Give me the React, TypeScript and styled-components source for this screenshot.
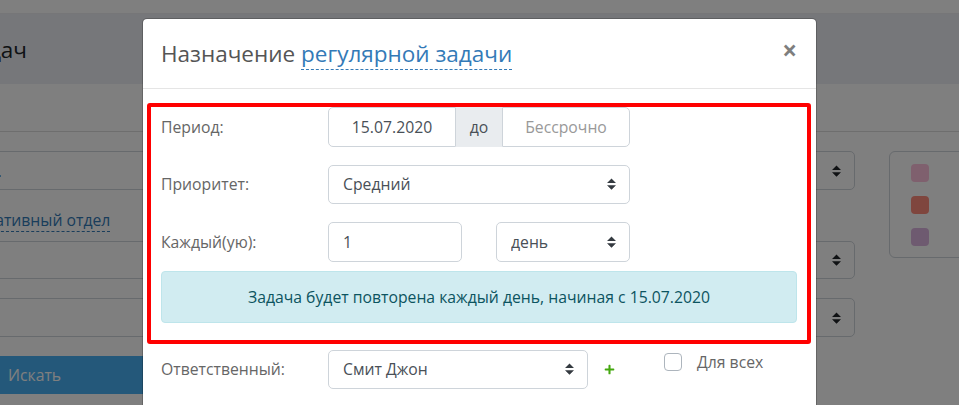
import React from 'react';
import styled, { createGlobalStyle } from 'styled-components';
import { FaPlus } from 'react-icons/fa';

const arrows = (color: string) =>
  `url("data:image/svg+xml,%3csvg xmlns='http://www.w3.org/2000/svg' viewBox='0 0 4 5'%3e%3cpath fill='${color}' d='M2 0L0 2h4zm0 5L0 3h4z'/%3e%3c/svg%3e")`;

const App = () => {
  return (
    <>
      <GlobalStyle />
      <Page>
        <TopBar />
        <TitleBar>
          <PageTitle>Список задач</PageTitle>
        </TitleBar>
        <TabStrip />
        <Filters>
          <LeftColumn>
            <FilterBox>Все.</FilterBox>
            <LinkRow>
              <DepartmentLink>Административный отдел</DepartmentLink>
            </LinkRow>
            <FilterBox $height={38} />
            <FilterBox $top={19} />
            <SearchButton>Искать</SearchButton>
          </LeftColumn>
          <RightColumn>
            <FilterSelect />
            <LinkRow />
            <FilterSelect $height={38} />
            <FilterSelect $top={19} />
          </RightColumn>
          <SwatchPanel>
            <Swatch $color='#ffc0dc' />
            <Swatch $color='#ff8c7c' />
            <Swatch $color='#dcb4e0' />
          </SwatchPanel>
        </Filters>

        <Overlay />

        <Modal>
          <ModalHeader>
            <ModalTitle>
              Назначение <TitleLink>регулярной задачи</TitleLink>
            </ModalTitle>
            <CloseButton>×</CloseButton>
          </ModalHeader>
          <ModalBody>
            <Highlight>
              <FormRow>
                <Label>Период:</Label>
                <DateGroup>
                  <DateInput readOnly value='15.07.2020' />
                  <DateAddon>до</DateAddon>
                  <DateInput $end readOnly placeholder='Бессрочно' />
                </DateGroup>
              </FormRow>
              <FormRow>
                <Label>Приоритет:</Label>
                <Select $width={302} defaultValue='Средний'>
                  <option>Средний</option>
                </Select>
              </FormRow>
              <FormRow>
                <Label>Каждый(ую):</Label>
                <TextInput readOnly value='1' />
                <Select $width={134} $left={34} defaultValue='день'>
                  <option>день</option>
                </Select>
              </FormRow>
              <Notice>Задача будет повторена каждый день, начиная с 15.07.2020</Notice>
            </Highlight>
            <AssigneeRow>
              <Label>Ответственный:</Label>
              <Select $width={260} defaultValue='Смит Джон'>
                <option>Смит Джон</option>
              </Select>
              <AddIcon>
                <FaPlus size={11} />
              </AddIcon>
              <CheckLabel>
                <CheckBox type='checkbox' />
                Для всех
              </CheckLabel>
            </AssigneeRow>
          </ModalBody>
        </Modal>
      </Page>
    </>
  );
};

export default App;

const GlobalStyle = createGlobalStyle`
  html, body {
    margin: 0;
    padding: 0;
  }
  * {
    box-sizing: border-box;
  }
  body {
    font-family: 'Open Sans', 'Liberation Sans', sans-serif;
    font-size: 15.75px;
    color: #495057;
    background-color: #fff;
  }
`;

const Page = styled.div`
  position: relative;
  width: 959px;
  height: 405px;
  overflow: hidden;
  background-color: #fff;
`;

const TopBar = styled.div`
  height: 14px;
  background-color: #fff;
  border-bottom: 1px solid #ecedf0;
`;

const TitleBar = styled.div`
  height: 70px;
  display: flex;
  align-items: center;
  background-color: #eceef4;
`;

const PageTitle = styled.h1`
  width: 27px;
  margin: 0;
  display: flex;
  justify-content: flex-end;
  white-space: nowrap;
  font-size: 22.5px;
  font-weight: 400;
  color: #212529;
`;

const TabStrip = styled.div`
  height: 48px;
  border-bottom: 1px solid #dcdcdc;
`;

const Filters = styled.div`
  display: flex;
  padding-top: 19px;
`;

const LeftColumn = styled.div`
  flex: none;
  width: 400px;
  margin-left: -90px;
  display: flex;
  flex-direction: column;
`;

const RightColumn = styled.div`
  flex: none;
  width: 300px;
  margin-left: 245px;
  display: flex;
  flex-direction: column;
`;

const FilterBox = styled.div<{ $height?: number; $top?: number }>`
  height: ${(p) => p.$height ?? 39}px;
  margin-top: ${(p) => p.$top ?? 0}px;
  padding-left: 60px;
  display: flex;
  align-items: center;
  border: 1px solid #ced4da;
  border-radius: 5px;
  color: #212529;
`;

const FilterSelect = styled(FilterBox)`
  background: ${arrows('%23212529')} no-repeat right 13px center / 9px 12px;
`;

const LinkRow = styled.div`
  height: 51px;
  padding-top: 10px;
  display: flex;
  align-items: center;
`;

const DepartmentLink = styled.a`
  line-height: 21px;
  color: #337ab7;
  border-bottom: 1px dashed #337ab7;
  white-space: nowrap;
`;

const SearchButton = styled.div`
  height: 38px;
  margin-top: 19px;
  padding-left: 98px;
  display: flex;
  align-items: center;
  color: #fff;
  background-color: #48b0f4;
  border-radius: 4px;
`;

const SwatchPanel = styled.div`
  flex: none;
  width: 100px;
  height: 107px;
  margin-left: 34px;
  padding: 12px 0 0 21px;
  display: flex;
  flex-direction: column;
  gap: 14px;
  border: 1px solid #ced4da;
  border-radius: 6px;
`;

const Swatch = styled.span<{ $color: string }>`
  width: 18px;
  height: 18px;
  border-radius: 4px;
  background-color: ${(p) => p.$color};
`;

const Overlay = styled.div`
  position: absolute;
  inset: 0;
  background-color: rgba(0, 0, 0, 0.5);
`;

const Modal = styled.div`
  position: absolute;
  top: 18px;
  left: 142px;
  width: 675px;
  height: 500px;
  background-color: #fff;
  border: 1px solid rgba(0, 0, 0, 0.2);
  border-radius: 5px;
  background-clip: padding-box;
`;

const ModalHeader = styled.div`
  height: 70px;
  padding: 0 19px 0 18px;
  display: flex;
  align-items: center;
  justify-content: space-between;
  border-bottom: 1px solid #e5e5e5;
`;

const ModalTitle = styled.h4`
  margin: 0;
  font-size: 22.5px;
  font-weight: 400;
  color: #555;
`;

const TitleLink = styled.a`
  color: #337ab7;
  border-bottom: 1px dashed #337ab7;
`;

const CloseButton = styled.span`
  margin-bottom: 7px;
  font-size: 26px;
  font-weight: 700;
  line-height: 1;
  color: #000;
  opacity: 0.5;
`;

const ModalBody = styled.div`
  padding: 14px 5px 0 4px;
`;

const Highlight = styled.div`
  padding: 0 10px 17px;
  border: 4px solid #f00;
  border-radius: 3px;
`;

const FormRow = styled.div`
  display: flex;
  align-items: center;
  margin-bottom: 18px;
  &:nth-of-type(3) {
    margin-bottom: 9px;
  }
`;

const Label = styled.label`
  flex: 0 0 167px;
  color: #666;
`;

const DateGroup = styled.div`
  display: flex;
  width: 302px;
`;

const DateInput = styled.input<{ $end?: boolean }>`
  width: 128px;
  height: 39.5px;
  padding: 0 12px;
  border: 1px solid #ced4da;
  border-radius: ${(p) => (p.$end ? '0 5px 5px 0' : '5px 0 0 5px')};
  font: inherit;
  color: #495057;
  text-align: center;
  outline: none;
  &::placeholder {
    color: #999;
  }
`;

const DateAddon = styled.span`
  width: 46px;
  height: 39.5px;
  display: flex;
  align-items: center;
  justify-content: center;
  background-color: #e9ecef;
  color: #495057;
`;

const TextInput = styled.input`
  width: 134px;
  height: 39.5px;
  padding: 0 14px;
  border: 1px solid #ced4da;
  border-radius: 5px;
  font: inherit;
  color: #495057;
  outline: none;
`;

const Select = styled.select<{ $width: number; $left?: number }>`
  appearance: none;
  width: ${(p) => p.$width}px;
  height: 39.5px;
  margin-left: ${(p) => p.$left ?? 0}px;
  padding: 0 14px;
  border: 1px solid #ced4da;
  border-radius: 5px;
  font: inherit;
  color: #495057;
  background: #fff ${arrows('%23343a40')} no-repeat right 13px center / 9px 12px;
  outline: none;
`;

const Notice = styled.div`
  height: 52px;
  display: flex;
  align-items: center;
  justify-content: center;
  background-color: #d1ecf1;
  border: 1px solid #bee5eb;
  border-radius: 4px;
  color: #0c5460;
`;

const AssigneeRow = styled.div`
  display: flex;
  align-items: center;
  margin-top: 6px;
  padding: 0 14px;
`;

const AddIcon = styled.span`
  display: flex;
  margin-left: 16px;
  margin-top: 1px;
  color: #44a80f;
`;

const CheckLabel = styled.label`
  display: flex;
  align-items: center;
  align-self: flex-start;
  margin-left: 49px;
  margin-top: 1px;
  color: #666;
`;

const CheckBox = styled.input`
  appearance: none;
  width: 18px;
  height: 18px;
  margin: 0 15px 0 0;
  background-color: #fff;
  border: 1px solid #adb5bd;
  border-radius: 4px;
`;
